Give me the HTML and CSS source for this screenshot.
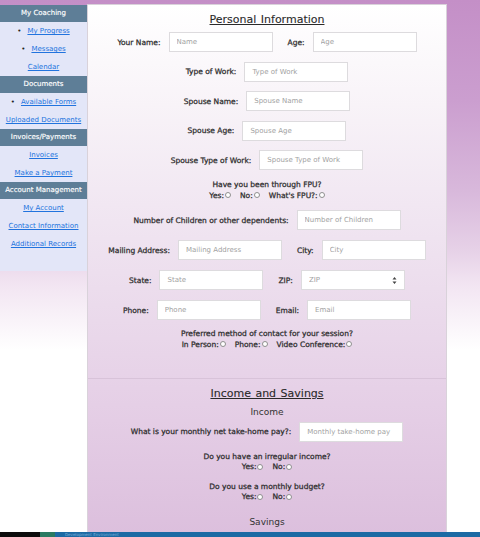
FILE: index.html
```html
<!DOCTYPE html>
<html lang="en">
<head>
<meta charset="utf-8">
<title>Personal Information</title>
<link rel="stylesheet" href="styles.css">
</head>
<body>
<div class="page">
  <nav class="sidebar">
    <div class="side-h">My Coaching</div>
    <ul class="side-list">
      <li class="bullet"><a href="#">My Progress</a></li>
      <li class="bullet"><a href="#">Messages</a></li>
      <li><a href="#">Calendar</a></li>
    </ul>
    <div class="side-h">Documents</div>
    <ul class="side-list">
      <li class="bullet"><a href="#">Available Forms</a></li>
      <li><a href="#">Uploaded Documents</a></li>
    </ul>
    <div class="side-h">Invoices/Payments</div>
    <ul class="side-list">
      <li><a href="#">Invoices</a></li>
      <li><a href="#">Make a Payment</a></li>
    </ul>
    <div class="side-h">Account Management</div>
    <ul class="side-list last">
      <li><a href="#">My Account</a></li>
      <li><a href="#">Contact Information</a></li>
      <li><a href="#">Additional Records</a></li>
    </ul>
  </nav>

  <main class="panel">
    <section class="sec sec-personal">
      <h2 class="sec-title">Personal Information</h2>
      <div class="row">
        <label>Your Name:</label><input class="field" placeholder="Name">
        <label class="second">Age:</label><input class="field" placeholder="Age">
      </div>
      <div class="row">
        <label>Type of Work:</label><input class="field" placeholder="Type of Work">
      </div>
      <div class="row">
        <label>Spouse Name:</label><input class="field" placeholder="Spouse Name">
      </div>
      <div class="row">
        <label>Spouse Age:</label><input class="field" placeholder="Spouse Age">
      </div>
      <div class="row">
        <label>Spouse Type of Work:</label><input class="field" placeholder="Spouse Type of Work">
      </div>
      <div class="q q-fpu">
        <div>Have you been through FPU?</div>
        <div class="radios">
          <span>Yes:<input type="radio" name="fpu"></span>
          <span>No:<input type="radio" name="fpu"></span>
          <span>What's FPU?:<input type="radio" name="fpu"></span>
        </div>
      </div>
      <div class="row r2">
        <label>Number of Children or other dependents:</label><input class="field" placeholder="Number of Children">
      </div>
      <div class="row r2">
        <label>Mailing Address:</label><input class="field" placeholder="Mailing Address">
        <label class="second">City:</label><input class="field" placeholder="City">
      </div>
      <div class="row r2">
        <label>State:</label><input class="field" placeholder="State">
        <label class="second">ZIP:</label><span class="field num"><input placeholder="ZIP"><svg class="spin" width="5" height="9" viewBox="0 0 5 9"><path d="M2.5 1 L4.5 3.6 H0.5 Z M2.5 8 L4.5 5.4 H0.5 Z" fill="#444"/></svg></span>
      </div>
      <div class="row r2">
        <label>Phone:</label><input class="field" placeholder="Phone">
        <label class="second">Email:</label><input class="field" placeholder="Email">
      </div>
      <div class="q q-contact">
        <div>Preferred method of contact for your session?</div>
        <div class="radios">
          <span>In Person:<input type="radio" name="contact"></span>
          <span>Phone:<input type="radio" name="contact"></span>
          <span>Video Conference:<input type="radio" name="contact"></span>
        </div>
      </div>
    </section>

    <section class="sec sec-income">
      <h2 class="sec-title">Income and Savings</h2>
      <h3 class="sub">Income</h3>
      <div class="row">
        <label>What is your monthly net take-home pay?:</label><input class="field" placeholder="Monthly take-home pay">
      </div>
      <div class="q q-small q-first">
        <div>Do you have an irregular income?</div>
        <div class="radios">
          <span>Yes:<input type="radio" name="irr"></span>
          <span>No:<input type="radio" name="irr"></span>
        </div>
      </div>
      <div class="q q-small">
        <div>Do you use a monthly budget?</div>
        <div class="radios">
          <span>Yes:<input type="radio" name="bud"></span>
          <span>No:<input type="radio" name="bud"></span>
        </div>
      </div>
      <h3 class="sub sub-savings">Savings</h3>
    </section>
  </main>
</div>
<div class="taskbar">
  <span class="tb-start"></span><span class="tb-app"></span><span class="tb-text">Development Environment</span>
</div>
</body>
</html>
```
FILE: styles.css
```css
html {
  background: #fff;
}
body {
  margin: 0;
  min-height: 537px;
  font-family: "DejaVu Sans", "Liberation Sans", sans-serif;
  color: #383838;
  background-color: #fff;
  background-image: linear-gradient(to bottom, #c48fc7 0, #cb9ecf 100px, #d8b8db 190px, #e6d1e7 250px, #f2e5f2 285px, #f8f1f8 315px, #fdfbfd 340px, #fff 350px);
  background-size: 100% 350px;
  background-repeat: no-repeat;
}
.page {
  display: flex;
  align-items: flex-start;
  padding-top: 4px;
}

/* Sidebar */
.sidebar {
  width: 87px;
  margin-top: 1px;
  background: #e3e6f8;
  padding-bottom: 18px;
  flex-shrink: 0;
}
.side-h {
  height: 17px;
  line-height: 17px;
  background: #5e7e97;
  color: #fff;
  font-size: 7px;
  text-align: center;
  white-space: nowrap;
  -webkit-text-stroke: 0.15px #fff;
}
.side-list {
  list-style: none;
  margin: 0;
  padding: 0;
}
.side-list li {
  height: 18px;
  line-height: 18px;
  text-align: center;
  font-size: 7px;
  white-space: nowrap;
}
.side-list li.bullet::before {
  content: "\2022";
  color: #222;
  margin-right: 6px;
}
.side-list a {
  color: #2173de;
  text-decoration: underline;
}

/* Main panel */
.panel {
  width: 358px;
  min-height: 560px;
  border: 1px solid #d9d2da;
  background: linear-gradient(to bottom, #fff 0, #f8f3f8 100px, #f1e7f2 200px, #ebdbec 300px, #e5cfe6 400px, #dcbfdd 530px, #d9bbdb 560px);
}
.sec {
  display: flex;
  flex-direction: column;
  align-items: center;
}
.sec-personal {
  padding-top: 7px;
  padding-bottom: 28px;
}
.sec-income {
  border-top: 1px solid #d8c3d9;
  padding-top: 7px;
}
.sec-title {
  margin: 0 0 5px;
  font-size: 11px;
  line-height: 15px;
  font-weight: normal;
  color: #2a2a2a;
  text-decoration: underline;
  word-spacing: 1px;
  -webkit-text-stroke: 0.1px #2a2a2a;
}
.sub {
  margin: 0 0 3px;
  font-size: 9px;
  line-height: 13px;
  font-weight: normal;
  color: #333;
}
.sub-savings {
  margin-top: 3.5px;
}
.row {
  display: flex;
  align-items: center;
  height: 20px;
  margin-bottom: 9.6px;
}
.row.r2 {
  margin-bottom: 10px;
}
.row label {
  font-size: 7.5px;
  color: #2c2c2c;
  margin-right: 8px;
  white-space: nowrap;
  -webkit-text-stroke: 0.25px #2c2c2c;
}
.row label.second {
  margin-left: 15px;
}
.field {
  box-sizing: border-box;
  width: 104px;
  height: 20px;
  border: 1px solid #dddbde;
  background: #fff;
  padding: 0 7px;
  font-family: "DejaVu Sans", "Liberation Sans", sans-serif;
  font-size: 7px;
  color: #333;
  outline: none;
  margin: 0;
}
.field::placeholder,
.num input::placeholder {
  color: #a2a2a2;
}
.num {
  display: flex;
  align-items: center;
  padding-right: 7px;
}
.num input {
  flex: 1;
  min-width: 0;
  border: 0;
  padding: 0;
  margin: 0;
  background: transparent;
  font-family: "DejaVu Sans", "Liberation Sans", sans-serif;
  font-size: 7px;
  outline: none;
}
.spin {
  display: block;
}
.q {
  text-align: center;
  font-size: 7.5px;
  color: #2c2c2c;
  line-height: 11px;
  white-space: nowrap;
  -webkit-text-stroke: 0.25px #2c2c2c;
}
.q-fpu {
  margin-top: -1px;
  margin-bottom: 9.3px;
}
.q-contact {
  margin-top: -2.5px;
}
.q-small {
  line-height: 10px;
  margin-bottom: 10px;
}
.q-first {
  margin-top: 1px;
}
.radios {
  display: flex;
  justify-content: center;
  gap: 9px;
}
.radios span {
  display: inline-flex;
  align-items: center;
}
.radios input {
  appearance: none;
  -webkit-appearance: none;
  width: 6px;
  height: 6px;
  margin: 0 0 0 1px;
  border: 1px solid #8f8f8f;
  border-radius: 50%;
  background: #fff;
  box-sizing: border-box;
}

/* Taskbar */
.taskbar {
  position: fixed;
  left: 0;
  right: 0;
  bottom: 0;
  height: 5px;
  display: flex;
  background: #1c6aa4;
  overflow: hidden;
}
.tb-start {
  width: 40px;
  background: #0c0c0c;
}
.tb-app {
  width: 15px;
  background: #2a7a62;
}
.tb-text {
  margin-left: 10px;
  font-size: 4px;
  line-height: 5px;
  color: #7fb0d8;
}
```
